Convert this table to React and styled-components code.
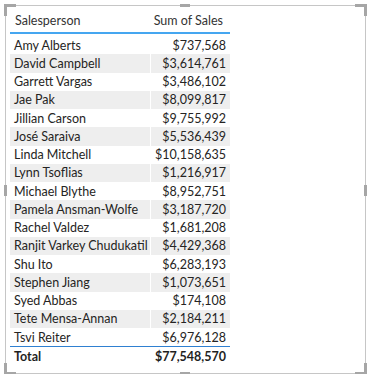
import React from "react"
import styled, { createGlobalStyle } from "styled-components"

const GlobalStyle = createGlobalStyle`
  html, body {
    margin: 0;
    padding: 0;
    background: #ffffff;
  }
  body {
    font-family: Lato, "Noto Sans", sans-serif;
  }
`

const rows = [
  ["Amy Alberts", "$737,568"],
  ["David Campbell", "$3,614,761"],
  ["Garrett Vargas", "$3,486,102"],
  ["Jae Pak", "$8,099,817"],
  ["Jillian Carson", "$9,755,992"],
  ["José Saraiva", "$5,536,439"],
  ["Linda Mitchell", "$10,158,635"],
  ["Lynn Tsoflias", "$1,216,917"],
  ["Michael Blythe", "$8,952,751"],
  ["Pamela Ansman-Wolfe", "$3,187,720"],
  ["Rachel Valdez", "$1,681,208"],
  ["Ranjit Varkey Chudukatil", "$4,429,368"],
  ["Shu Ito", "$6,283,193"],
  ["Stephen Jiang", "$1,073,651"],
  ["Syed Abbas", "$174,108"],
  ["Tete Mensa-Annan", "$2,184,211"],
  ["Tsvi Reiter", "$6,976,128"],
]

const Frame = styled.div`
  position: relative;
  box-sizing: border-box;
  margin: 5px 0 0 5px;
  width: 361px;
  height: 369px;
  border: 1px solid #c6c6c6;
  padding: 3px 0 0 4px;
`

const Handle = styled.div`
  position: absolute;
  background: #a6a6a6;
  width: ${p => p.w}px;
  height: ${p => p.h}px;
  ${p => p.css}
`

const Corner = styled.div`
  position: absolute;
  width: 9px;
  height: 9px;
  border-color: #a6a6a6;
  border-style: solid;
  border-width: 0;
  ${p => p.pos}
`

const Table = styled.div`
  width: 220px;
  display: grid;
  grid-template-columns: 140px 80px;
  font-size: 12.5px;
  color: #252423;
`

const HeaderCell = styled.div`
  height: 23px;
  display: flex;
  align-items: center;
  justify-content: ${p => (p.right ? "flex-end" : "flex-start")};
  padding: 0 7px 0 5px;
  white-space: nowrap;
  color: #333333;
  border-bottom: 2px solid #45a6f0;
  margin-bottom: 2px;
`

const Cell = styled.div`
  height: 18.25px;
  display: flex;
  align-items: center;
  justify-content: ${p => (p.right ? "flex-end" : "flex-start")};
  padding: 0 4px 0 4px;
  white-space: nowrap;
  background: ${p => (p.shade ? "#eeeeee" : "transparent")};
  border-left: ${p => (p.right ? "1px solid #ffffff" : "0")};
`

const TotalCell = styled.div`
  height: 18px;
  display: flex;
  align-items: center;
  justify-content: ${p => (p.right ? "flex-end" : "flex-start")};
  padding: 0 4px 0 4px;
  font-weight: 700;
  color: #1f1f1f;
  border-top: 1px solid #2f80d1;
`

const App = () => {
  return (
    <React.Fragment>
      <GlobalStyle />
      <Frame>
        <Corner pos="top:-2px;left:-2px;border-top-width:3px;border-left-width:3px;" />
        <Corner pos="top:-2px;right:-2px;border-top-width:3px;border-right-width:3px;" />
        <Corner pos="bottom:-2px;left:-2px;border-bottom-width:3px;border-left-width:3px;" />
        <Corner pos="bottom:-2px;right:-2px;border-bottom-width:3px;border-right-width:3px;" />
        <Handle w={10} h={3} css="top:-2px;left:174px;" />
        <Handle w={10} h={3} css="bottom:-2px;left:174px;" />
        <Handle w={3} h={11} css="left:-2px;top:179px;" />
        <Handle w={3} h={11} css="right:-2px;top:179px;" />
        <Table>
          <HeaderCell>Salesperson</HeaderCell>
          <HeaderCell right>Sum of Sales</HeaderCell>
          {rows.map(([name, value], i) => (
            <React.Fragment key={name}>
              <Cell shade={i % 2 === 1}>{name}</Cell>
              <Cell right shade={i % 2 === 1}>{value}</Cell>
            </React.Fragment>
          ))}
          <TotalCell>Total</TotalCell>
          <TotalCell right>$77,548,570</TotalCell>
        </Table>
      </Frame>
    </React.Fragment>
  )
}

export default App
